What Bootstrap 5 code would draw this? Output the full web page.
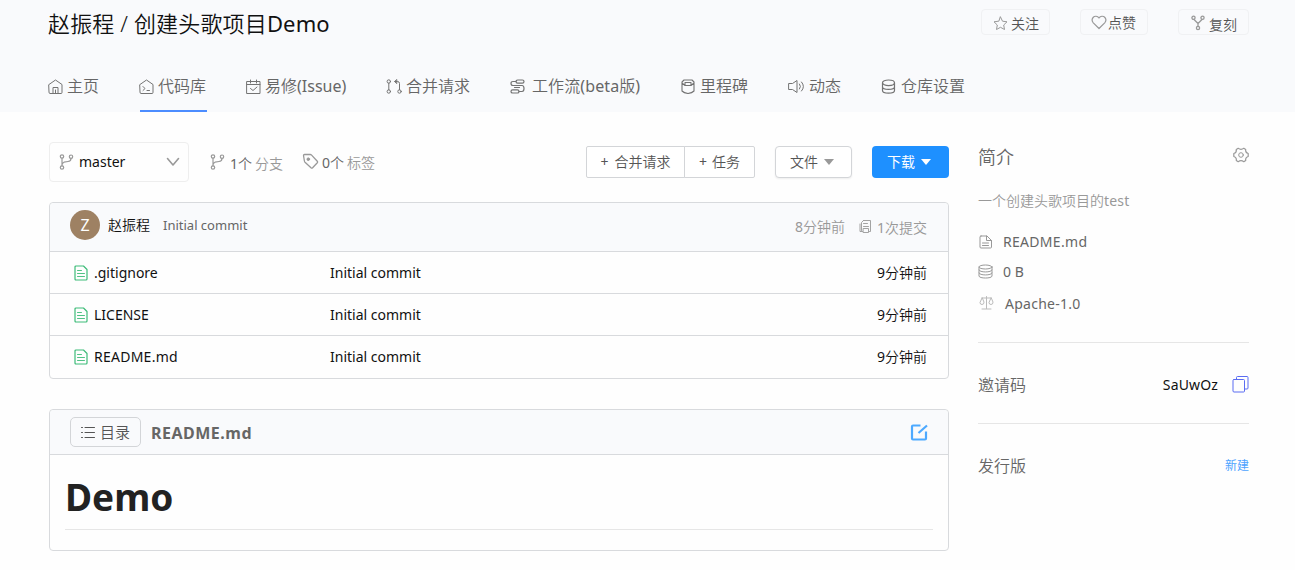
<!DOCTYPE html>
<html lang="zh-CN">
<head>
<meta charset="utf-8">
<meta name="viewport" content="width=device-width, initial-scale=1">
<title>赵振程 / 创建头歌项目Demo</title>
<link href="https://cdn.jsdelivr.net/npm/bootstrap@5.3.0/dist/css/bootstrap.min.css" rel="stylesheet">
<style>
body{font-family:"Noto Sans","Noto Sans CJK SC",sans-serif;font-size:14px;line-height:20px;color:#111;background:#fefefe;overflow:hidden}
svg{display:block;flex:none;fill:none;stroke:currentColor;stroke-width:1;stroke-linejoin:round;stroke-linecap:round}
.wrap{width:1201px;margin-left:48px}
.site-head{background:#f9fafc;height:112px}
.head-top{height:49px}
.proj-title{font-size:22px;line-height:30px;font-weight:350;color:#111;margin:8px 0 0;letter-spacing:.15px}
.lt{font-weight:400}
.act-row{gap:30px;padding-top:9px}
.act{height:26px;border:1px solid #f0f1f3;border-radius:4px;color:#555;font-weight:350}
.act svg{color:#999}
.tabs{height:51px;gap:39px;margin-top:12px;font-size:16px}
.tab{height:51px;padding-bottom:2px;color:#666;text-decoration:none;white-space:nowrap;font-weight:350}
.tab svg{color:#737373;margin-top:2px}
.tab.active{background:linear-gradient(#4c8dff,#4c8dff) 1px 100%/67px 2px no-repeat}
.mainc{width:900px;margin-left:1px}
.sidec{width:271px}
.branch-sel{width:140px;height:40px;border:1px solid #eee;border-radius:4px;padding:0 8px 0 9px}
.g6{color:#666}.g9{color:#999}
.obtn{height:32px;border:1px solid #d3d5d8;background:#fff;color:#555;font-weight:350;white-space:pre}
.box{border:1px solid #d8dadd;border-radius:4px}
.box-head{background:#f9fafc;border-bottom:1px solid #d8dadd;border-radius:4px 4px 0 0}
.file-row{height:42px;border-bottom:1px solid #d8dadd;padding:0 21px 0 24px;font-weight:350}
.file-row:last-child{border-bottom:0}
.file-row svg{color:#3dbb78}
.file-name{width:236px;margin-left:6px}
.avatar{width:30px;height:30px;background:#9e8163;color:#fff;font-size:16px}
.dl{height:32px;width:77px;background:#1e90ff;border-radius:4px;color:#fff}
.tri{width:0;height:0;border:5px solid transparent;border-top:6px solid currentColor;border-bottom:0}
.rule{height:1px;background:#e6e6e6}
.demi{font-weight:350}
.md-title{font-size:37px;line-height:46px;font-weight:700;color:#222;margin:0;height:55px}
</style>
</head>
<body>
<header class="site-head">
 <div class="wrap">
  <div class="d-flex justify-content-between head-top">
   <h1 class="proj-title">赵振程 / 创建头歌项目<span class="lt">Demo</span></h1>
   <div class="d-flex act-row">
    <div class="act d-flex" style="width:69px;padding:3px 0 0 11px"><svg width="15" height="15" viewBox="0 0 15 15" style="margin-top:3px"><path d="M7.500 1l2 4.200 4.500.6-3.300 3.200.8 4.500-4-2.200-4 2.200.8-4.500L1 5.800l4.500-.6z"/></svg><span style="margin:1px 0 0 3px">关注</span></div>
    <div class="act d-flex" style="width:68px;padding:3px 0 0 10px"><svg width="16" height="15" viewBox="0 0 16 15" style="margin-top:2px"><path stroke-width="1.200" d="M8 3C6.600.8 3.600.7 2.100 2.500.8 4.100 1 6.300 2.300 7.800L8 13.500l5.700-5.700C15 6.300 15.200 4.100 13.900 2.500 12.400.7 9.400.8 8 3z"/></svg><span style="margin:0 0 0 1px">点赞</span></div>
    <div class="act d-flex" style="width:71px;padding:3px 0 0 12px"><svg width="14" height="16" viewBox="0 0 14 16" style="margin-top:2px"><g stroke-width="1.300"><circle cx="2.500" cy="2.800" r="1.600"/><circle cx="11.500" cy="2.800" r="1.600"/><circle cx="7" cy="13" r="1.600"/><path d="M3 4.500L7 8.500v2.700M11 4.500L7 8.500"/></g></svg><span style="margin:2px 0 0 4px">复刻</span></div>
   </div>
  </div>
  <nav class="tabs d-flex">
   <a class="tab d-flex align-items-center" style="width:52px"><svg width="15" height="15" viewBox="0 0 15 15"><path d="M1 5.500L7.500 1 14 5.500v8q0 1-1 1H2q-1 0-1-1zM5 14.500v-6h5v6M7.500 11v3.500"/></svg><span class="ms-1">主页</span></a>
   <a class="tab active d-flex align-items-center" style="width:68px"><svg width="15" height="15" viewBox="0 0 15 15"><path d="M1 5.500L7.500 1 14 5.500v8q0 1-1 1H2q-1 0-1-1zM4 7.500L6 9.500l-2 2M8 11.500h2.500"/></svg><span class="ms-1">代码库</span></a>
   <a class="tab d-flex align-items-center" style="width:101px"><svg width="15" height="15" viewBox="0 0 15 15"><path d="M1 2.500h13v12H1zM1 5.500h13M4.500 1v3M10.500 1v3M4.500 9.500L7 11.500l4-3.500"/></svg><span class="ms-1">易修<span class="lt">(Issue)</span></span></a>
   <a class="tab d-flex align-items-center" style="width:85px"><svg width="16" height="15" viewBox="0 0 16 15"><circle cx="2.800" cy="2.500" r="1.700"/><circle cx="2.800" cy="12.500" r="1.700"/><circle cx="13.500" cy="12.500" r="1.700"/><path d="M2.800 4.200v6.600M9 2.500h2.500q2 0 2 2v6.300M10.500.8L8.500 2.500l2 1.800z"/></svg><span class="ms-1">合并请求</span></a>
   <a class="tab d-flex align-items-center" style="width:132px"><svg width="15" height="15" viewBox="0 0 15 15"><g stroke-width="1.200"><rect x="6" y="1" width="8" height="3.200" rx="1.600"/><rect x="1" y="10.800" width="8" height="3.200" rx="1.600"/><path d="M6 2.500H3Q1 2.500 1 4.500t2 2h9q2 0 2 3t-2 3H9M4.500 8.500h5"/></g></svg><span style="margin-left:7px;letter-spacing:.1px">工作流<span class="lt">(beta</span>版<span class="lt">)</span></span></a>
   <a class="tab d-flex align-items-center" style="width:68px"><svg width="14" height="15" viewBox="0 0 14 15"><path stroke-width="1.100" d="M3 1h8l2 2v9q-2 2-6 2.500Q3 14 1 12V3zM4 3.500h6v3H4zM1 4l3 2.500M13 4l-3 2.500"/></svg><span style="margin-left:5px">里程碑</span></a>
   <a class="tab d-flex align-items-center" style="width:54px"><svg width="17" height="15" viewBox="0 0 17 15"><path d="M1 4.500h3.500L9 1.500v12l-4.500-3H1zM11.500 5q2 2.500 0 5M13.500 3q4 4.500 0 9"/></svg><span class="ms-1">动态</span></a>
   <a class="tab d-flex align-items-center" style="width:84px"><svg width="15" height="15" viewBox="0 0 15 15"><g stroke-width="1.200"><ellipse cx="7.500" cy="3.800" rx="6" ry="2.800"/><path d="M1.500 4v7.500c0 3.600 12 3.600 12 0V4M1.500 7.700c0 3.600 12 3.600 12 0"/></g></svg><span style="margin-left:5px">仓库设置</span></a>
  </nav>
 </div>
</header>
<div class="wrap d-flex">
 <main class="mainc">
  <div class="d-flex" style="height:90px;padding-top:30px">
   <div class="branch-sel d-flex align-items-center"><svg class="g9" width="15" height="16" viewBox="0 0 15 16"><g stroke-width="1.200"><circle cx="3" cy="2.500" r="1.700"/><circle cx="3" cy="13.500" r="1.700"/><circle cx="12" cy="2.700" r="1.700"/><path d="M3 4.200v7.600M12 4.400Q12 7 9 7.500L5 8.200Q3 9 3 11"/></g></svg><span style="margin-left:5px">master</span><svg class="ms-auto g9" width="14" height="10" viewBox="0 0 14 10"><path stroke-width="1.600" d="M1.500 1.500L7 8l5.500-6.500"/></svg></div>
   <div class="d-flex demi g9" style="margin:11px 0 0 21px"><svg width="15" height="16" viewBox="0 0 15 16" style="margin-top:1px"><g stroke-width="1.200"><circle cx="3" cy="2.500" r="1.700"/><circle cx="3" cy="13.500" r="1.700"/><circle cx="12" cy="2.700" r="1.700"/><path d="M3 4.200v7.600M12 4.400Q12 7 9 7.500L5 8.200Q3 9 3 11"/></g></svg><span style="margin:1px 0 0 5px"><span class="g6"><span class="lt">1</span>个</span><span style="margin-left:3px">分支</span></span></div>
   <div class="d-flex demi g9" style="margin:11px 0 0 19px"><svg width="17" height="17" viewBox="0 0 17 17"><path stroke-width="1.300" d="M2.500 1.500h5.700q.8 0 1.400.6l5.700 6.100q.7.800 0 1.600l-4.700 5q-.8.700-1.600 0L3 9.200q-.5-.5-.6-1.200L1.500 2.500q0-1 1-1z"/><circle cx="6.300" cy="6.200" r="1.300" fill="currentColor"/></svg><span style="margin:0 0 0 3px"><span class="g6"><span class="lt">0</span>个</span><span style="margin-left:3px">标签</span></span></div>
   <div class="d-flex ms-auto" style="margin-top:4px">
    <div class="obtn d-flex align-items-center justify-content-center" style="width:99px;gap:6px;border-radius:2px 0 0 2px"><span class="lt">+</span><span>合并请求</span></div>
    <div class="obtn d-flex align-items-center justify-content-center" style="width:71px;gap:5px;margin-left:-1px;border-radius:0 2px 2px 0"><span class="lt">+</span><span>任务</span></div>
    <div class="obtn rounded-1 d-flex align-items-center" style="width:77px;margin-left:20px;padding-left:14px;box-shadow:0 1px 2px #0001"><span>文件</span><i class="tri g9" style="margin-left:6px"></i></div>
    <div class="dl d-flex align-items-center" style="margin-left:20px;padding-left:15px"><span>下载</span><i class="tri" style="margin-left:6px"></i></div>
   </div>
  </div>
  <section class="box" style="height:177px">
   <div class="box-head d-flex" style="height:49px;padding:7px 21px 0 20px">
    <div class="avatar rounded-circle d-flex align-items-center justify-content-center">Z</div>
    <span style="margin:5px 0 0 8px" class="demi">赵振程</span><span class="g6" style="margin:5px 0 0 13px;font-size:13px">Initial commit</span>
    <span class="ms-auto demi g9" style="margin-top:7px"><span class="lt">8</span>分钟前</span>
    <svg class="g9" width="13" height="14" viewBox="0 0 13 14" style="margin:10px 5px 0 14px"><path d="M4.500.5h7v11h-1M4.500.5l-2 2v8M1 4v7.500h2.500M4.500 3.500h4M4.500 6.500h5M4.500 8.500h5v4h-5z" stroke-width=".9"/></svg>
    <span class="demi g9" style="margin-top:8px"><span class="lt">1</span>次提交</span>
   </div>
   <div class="file-row d-flex align-items-center"><svg width="14" height="16" viewBox="0 0 14 16"><path stroke-width="1.200" d="M2 1h7.500L13 4.500V14q0 1-1 1H2q-1 0-1-1V2q0-1 1-1z"/><path stroke-width=".9" d="M3.500 5.500h4M3.500 8.500h7M3.500 11.500h7"/></svg><span class="file-name lt">.gitignore</span><span class="lt">Initial commit</span><span class="ms-auto"><span class="lt">9</span>分钟前</span></div>
   <div class="file-row d-flex align-items-center"><svg width="14" height="16" viewBox="0 0 14 16"><path stroke-width="1.200" d="M2 1h7.500L13 4.500V14q0 1-1 1H2q-1 0-1-1V2q0-1 1-1z"/><path stroke-width=".9" d="M3.500 5.500h4M3.500 8.500h7M3.500 11.500h7"/></svg><span class="file-name lt">LICENSE</span><span class="lt">Initial commit</span><span class="ms-auto"><span class="lt">9</span>分钟前</span></div>
   <div class="file-row d-flex align-items-center"><svg width="14" height="16" viewBox="0 0 14 16"><path stroke-width="1.200" d="M2 1h7.500L13 4.500V14q0 1-1 1H2q-1 0-1-1V2q0-1 1-1z"/><path stroke-width=".9" d="M3.500 5.500h4M3.500 8.500h7M3.500 11.500h7"/></svg><span class="file-name lt" style="letter-spacing:.25px">README.md</span><span class="lt">Initial commit</span><span class="ms-auto"><span class="lt">9</span>分钟前</span></div>
  </section>
  <section class="box" style="height:142px;margin-top:30px">
   <div class="box-head d-flex align-items-center" style="height:45px;padding:0 20px">
    <div class="obtn d-flex align-items-center g6" style="width:71px;height:30px;border-radius:5px;padding-left:10px;background:transparent"><svg width="14" height="12" viewBox="0 0 14 12"><path d="M4 1.500h9.500M4 6.500h9.500M4 11.500h9.500M.5 1.500h1M.5 6.500h1M.5 11.500h1"/></svg><span style="margin-left:5px;font-size:15px">目录</span></div>
    <b class="g6" style="font-size:16px;margin:2px 0 0 10px;letter-spacing:.5px">README.md</b>
    <svg class="ms-auto" width="18" height="18" viewBox="0 0 18 18" style="color:#4da9ff"><path stroke-width="2.200" stroke-linecap="butt" d="M10.500 2.500H3Q2 2.500 2 3.500v12q0 1 1 1h12q1 0 1-1V8.500M8.500 10L17 2.500"/></svg>
   </div>
   <div style="padding:19px 15px 0"><h2 class="md-title">Demo</h2><div class="rule"></div></div>
  </section>
 </main>
 <aside class="sidec g6 demi" style="padding-top:30px;margin-left:29px">
  <div class="d-flex justify-content-between" style="height:46px"><span style="font-size:18px;line-height:30px">简介</span><svg class="g9" width="16" height="16" viewBox="0 0 16 16" style="margin-top:5px"><path stroke-width="1.200" d="M5.200 1.300Q8 3.300 10.800 1.300L12.700 2.500Q12.200 5.500 15.200 6.500V9.500Q12.200 10.500 12.700 13.500L10.800 14.700Q8 12.700 5.200 14.700L3.300 13.500Q3.800 10.500.8 9.500V6.500Q3.800 5.500 3.300 2.500z"/><circle cx="8" cy="8" r="2.300"/></svg></div>
  <div class="g9" style="height:43px;padding-top:3px">一个创建头歌项目的<span class="lt" style="letter-spacing:.2px">test</span></div>
  <div class="d-flex lt" style="height:30px"><svg class="g9" width="14" height="14" viewBox="0 0 14 14" style="margin:4px 10px 0 1px"><path d="M2 1h6l4.500 4.500V12q0 1-1 1H2q-1 0-1-1V2q0-1 1-1zM7.500 1v4.500h5M3.500 8h6M3.500 10.500h6"/></svg><span style="margin-top:1px;letter-spacing:.3px">README.md</span></div>
  <div class="d-flex lt" style="height:32px"><svg class="g9" width="15" height="15" viewBox="0 0 15 15" style="margin:3px 10px 0 0"><ellipse cx="7.500" cy="3" rx="6.500" ry="2"/><path d="M1 3v9c0 2.700 13 2.700 13 0V3M1 6c0 2.700 13 2.700 13 0M1 9c0 2.700 13 2.700 13 0"/></svg><span style="margin-top:1px">0 B</span></div>
  <div class="d-flex lt" style="height:49px"><svg width="15" height="15" viewBox="0 0 15 15" style="margin:3px 11px 0 1px;color:#bbb"><path d="M7.500.5v12M3 2h9M3 2L1 6.500q0 2 2 2t2-2zM12 2l-2 4.500q0 2 2 2t2-2zM3 13h9"/></svg><span style="margin-top:1px;letter-spacing:.25px">Apache-1.0</span></div>
  <div class="rule"></div>
  <div class="d-flex align-items-center" style="height:80px;padding-top:3px"><span style="font-size:16px">邀请码</span><span class="ms-auto lt" style="color:#111;letter-spacing:.15px">SaUwOz</span><svg width="17" height="17" viewBox="0 0 17 17" style="margin:-1px 0 0 14px;color:#5a6cf2"><path d="M2 3.500h9.500q1 0 1 1V15q0 1-1 1H2q-1 0-1-1V4.500q0-1 1-1zM4.500 3.500V1.500q0-1 1-1H15q1 0 1 1V12q0 1-1 1h-2.500"/></svg></div>
  <div class="rule"></div>
  <div class="d-flex align-items-center justify-content-between" style="height:83px"><span style="font-size:16px">发行版</span><span class="lt" style="font-size:12px;color:#4da3ff">新建</span></div>
 </aside>
</div>
<script src="https://cdn.jsdelivr.net/npm/bootstrap@5.3.0/dist/js/bootstrap.bundle.min.js"></script>
</body>
</html>
